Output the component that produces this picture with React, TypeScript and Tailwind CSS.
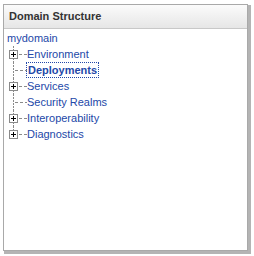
import React from "react";

function Connector({ plus, last }: { plus: boolean; last?: boolean }) {
  return (
    <svg width="18" height="16" viewBox="0 0 18 16" className="shrink-0">
      <line x1="4.5" y1="0" x2="4.5" y2={last ? 8 : 16} stroke="#8a8a8a" strokeDasharray="2 1" />
      <line x1={plus ? 10 : 6} y1="8.5" x2="18" y2="8.5" stroke="#8a8a8a" strokeDasharray="3 2" />
      {plus && (
        <g>
          <rect x="0.5" y="4.5" width="8" height="8" fill="#fff" stroke="#8a8a8a" />
          <line x1="2" y1="8.5" x2="7" y2="8.5" stroke="#000" />
          <line x1="4.5" y1="6" x2="4.5" y2="11" stroke="#000" />
        </g>
      )}
    </svg>
  );
}

const items = [
  { label: "Environment", plus: true },
  { label: "Deployments", plus: false, selected: true },
  { label: "Services", plus: true },
  { label: "Security Realms", plus: false },
  { label: "Interoperability", plus: true },
  { label: "Diagnostics", plus: true },
];

export default function App() {
  return (
    <div
      className="w-[254px] h-[256px] bg-white pl-[3px] pt-[4px]"
      style={{ fontFamily: '"Liberation Sans", Arial, sans-serif' }}
    >
      <div className="w-[245px] h-[247px] border border-[#a9a9a9] bg-white shadow-[2px_2px_0_1px_#b4b4b4] flex flex-col">
        <div className="h-[24px] border-b border-[#c8c8c8] bg-gradient-to-b from-[#fbfbfb] to-[#e6e6e6] flex items-center pl-[5px] text-[11px] font-bold text-[#333]">
          Domain Structure
        </div>
        <div className="pt-[2px] pl-[3px]">
          <div className="h-[15px] leading-[15px] text-[11px] text-[#2348a8]">mydomain</div>
          <div className="pl-[2px]">
            {items.map((it, i) => (
              <div key={it.label} className="flex items-center h-[16px]">
                <Connector plus={it.plus} last={i === items.length - 1} />
                <span
                  className={
                    it.selected
                      ? "ml-[-1px] px-[1px] leading-[14px] text-[11px] font-bold text-[#2348a8] border border-dotted border-[#2348a8]"
                      : "text-[11px] leading-[16px] text-[#2348a8]"
                  }
                >
                  {it.label}
                </span>
              </div>
            ))}
          </div>
        </div>
      </div>
    </div>
  );
}
